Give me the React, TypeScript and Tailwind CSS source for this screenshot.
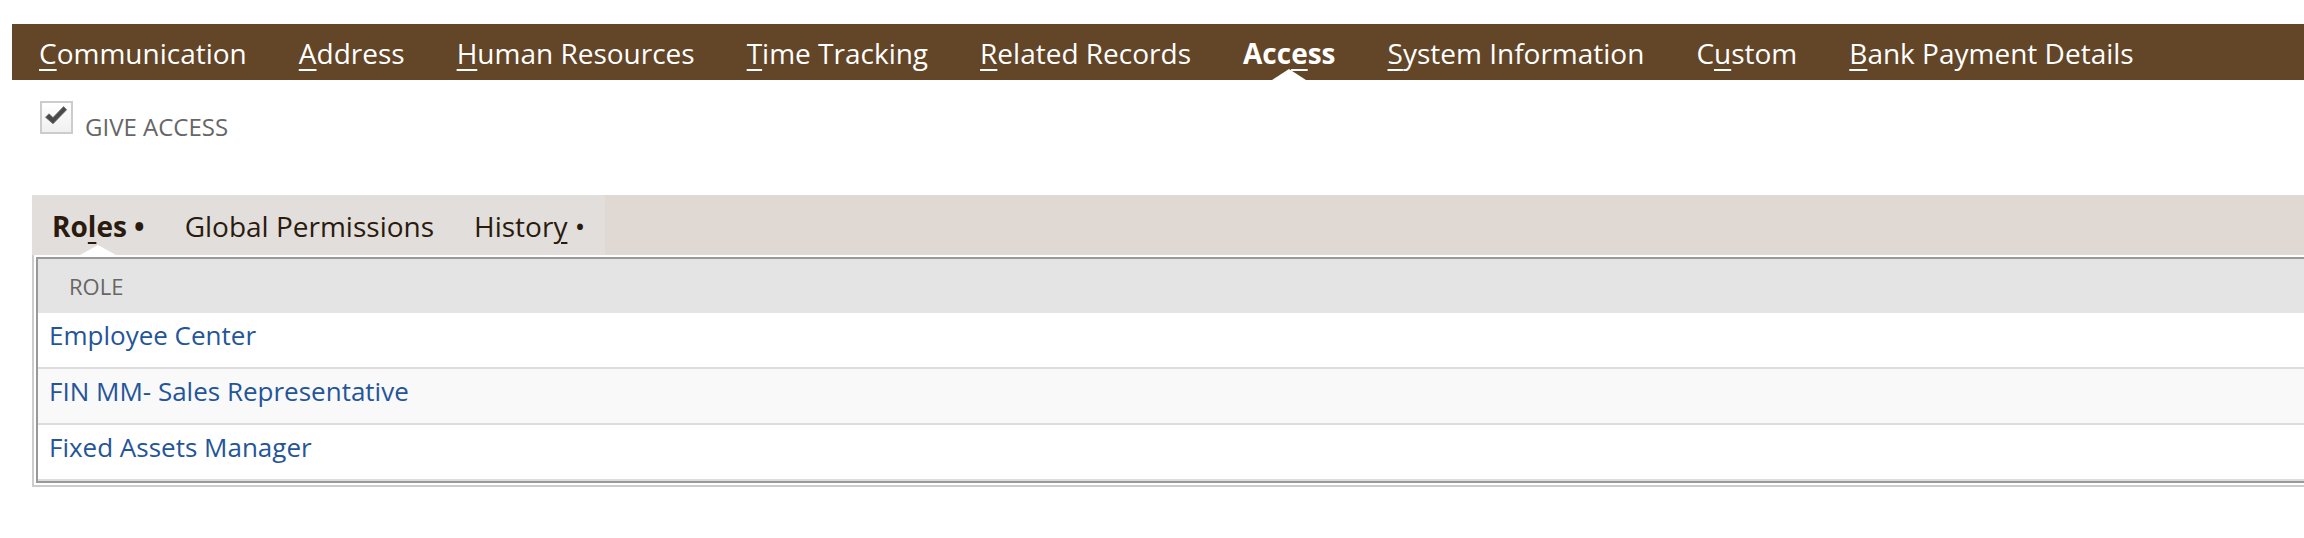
import React from "react";

type NavItem = { pre: string; k: string; post: string; active?: boolean };

const nav: NavItem[] = [
  { pre: "", k: "C", post: "ommunication" },
  { pre: "", k: "A", post: "ddress" },
  { pre: "", k: "H", post: "uman Resources" },
  { pre: "", k: "T", post: "ime Tracking" },
  { pre: "", k: "R", post: "elated Records" },
  { pre: "Acc", k: "e", post: "ss", active: true },
  { pre: "", k: "S", post: "ystem Information" },
  { pre: "C", k: "u", post: "stom" },
  { pre: "", k: "B", post: "ank Payment Details" },
];

const roles = ["Employee Center", "FIN MM- Sales Representative", "Fixed Assets Manager"];

export default function App() {
  return (
    <div className="w-[2304px] h-[538px] overflow-hidden bg-white font-['Open_Sans',sans-serif] pt-[24px]">
      {/* main tab bar */}
      <div className="ml-[12px] h-[56px] bg-[#634527] flex items-center pl-[1px] pt-[2px]">
        {nav.map((n) => (
          <div key={n.k + n.post} className="relative h-full flex items-center px-[26px]">
            <span
              className={
                "text-[28px] leading-[38px] text-white whitespace-nowrap " +
                (n.active ? "font-bold" : "font-normal")
              }
            >
              {n.pre}
              <span className="underline decoration-[2px] underline-offset-[5px]">{n.k}</span>
              {n.post}
            </span>
            {n.active && (
              <div className="absolute bottom-0 left-1/2 -translate-x-1/2 w-0 h-0 border-l-[17px] border-r-[17px] border-b-[11px] border-l-transparent border-r-transparent border-b-white" />
            )}
          </div>
        ))}
      </div>

      {/* give access */}
      <div className="ml-[40px] mt-[21px] h-[33px] flex items-start">
        <div className="w-[33px] h-[33px] shrink-0 border-2 border-[#cccccc] bg-gradient-to-b from-white to-[#f0f0f0] flex items-start justify-start pl-[2px] pt-[2px]">
          <svg width="24" height="22" viewBox="0 0 24 22">
            <path
              d="M1.5 12.2 L5 8.8 L9 12.6 L19.6 1.6 L22.6 4.8 L9 18.8 Z"
              fill="#4a4a4a"
              stroke="#6a6a6a"
              strokeWidth="0.8"
              strokeLinejoin="round"
            />
          </svg>
        </div>
        <span className="ml-[12px] mt-[10px] text-[24px] leading-[32px] text-[#666666] whitespace-nowrap">GIVE ACCESS</span>
      </div>

      {/* sub tabs */}
      <div className="ml-[32px] mt-[61px] h-[60px] bg-[#e0d8d2] flex">
        <div className="bg-[#e1dedb] flex h-full">
          <div className="relative h-full flex items-center px-[20px] pt-[2px]">
            <span className="text-[28px] leading-[36px] text-[#2b1a0e] font-bold whitespace-nowrap">
              Ro<span className="underline decoration-[2px] underline-offset-[5px]">l</span>es •
            </span>
            <div className="absolute bottom-0 left-1/2 -translate-x-1/2 w-0 h-0 border-l-[18px] border-r-[18px] border-b-[10px] border-l-transparent border-r-transparent border-b-white" />
          </div>
          <div className="h-full flex items-center px-[20px] pt-[2px]">
            <span className="text-[28px] leading-[36px] text-[#2b1a0e] whitespace-nowrap">Global Permissions</span>
          </div>
          <div className="h-full flex items-center px-[20px] pt-[2px]">
            <span className="text-[28px] leading-[36px] text-[#2b1a0e] whitespace-nowrap">
              Histor<span className="underline decoration-[2px] underline-offset-[5px]">y</span> •
            </span>
          </div>
        </div>
      </div>

      {/* roles list */}
      <div className="ml-[32px] w-[2300px] pt-[2px] pl-[2px] pb-[2px] border-l-2 border-b-2 border-[#cccccc] bg-white">
        <div className="border-2 border-[#999999]">
          <div className="h-[54px] bg-[#e4e4e4] flex items-center pl-[31px]">
            <span className="text-[22px] leading-[30px] text-[#666666]">ROLE</span>
          </div>
          {roles.map((r, i) => (
            <div
              key={r}
              className={
                "h-[56px] border-b-2 border-[#dddddd] pl-[11px] pt-[4px] " +
                (i % 2 === 1 ? "bg-[#f9f9f9]" : "bg-white")
              }
            >
              <span className="text-[26px] leading-[36px] text-[#255599] whitespace-nowrap">{r}</span>
            </div>
          ))}
        </div>
      </div>
    </div>
  );
}
